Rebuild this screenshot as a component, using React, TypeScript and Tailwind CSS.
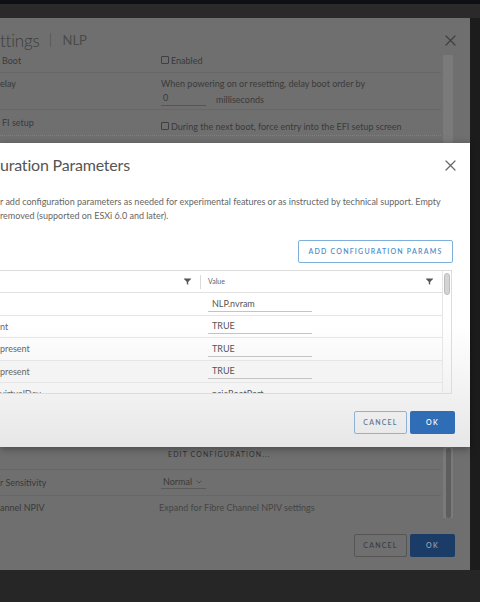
import { ChevronDown } from 'lucide-react';

function CloseIcon({ color = '#666' }: { color?: string }) {
  return (
    <svg width="11" height="11" viewBox="0 0 11 11" fill="none">
      <path d="M1 1l9 9M10 1l-9 9" stroke={color} strokeWidth="1.2" strokeLinecap="round" />
    </svg>
  );
}

function FilterIcon() {
  return (
    <svg width="7" height="7" viewBox="0 0 7 7">
      <path d="M0 0.5h7v1H0z M0.6 1.5h5.8L4.2 4v2.8L2.8 6V4z" fill="#555" />
    </svg>
  );
}

function BackDialog() {
  return (
    <div className="flex w-[470px] flex-col bg-[#6f6f6f] text-[#3a3a3a]">
      <div className="mt-[12px] flex h-[20px] items-center pr-[14px]">
        <span className="text-[17px] font-light leading-none tracking-[-0.2px] text-[#3c3c3c]">ttings</span>
        <span className="mx-[11px] h-[14px] w-px bg-[#5c5c5c]" />
        <span className="text-[13px] leading-none text-[#4a4a4a]">NLP</span>
        <span className="ml-auto">
          <CloseIcon color="#3f3f3f" />
        </span>
      </div>

      <div className="flex">
        <div className="flex w-[441px] flex-col text-[9px] leading-[11px]">
          <div className="flex h-[23px] items-center border-b border-[#676767] pb-[2px]">
            <span className="w-[161px] pl-[2px]">Boot</span>
            <span className="flex items-center gap-[2px]">
              <span className="h-[8px] w-[8px] rounded-[1px] border border-[#3f3f3f]" />
              Enabled
            </span>
          </div>
          <div className="flex h-[37px] border-b border-[#676767] pt-[5px]">
            <span className="w-[161px]">elay</span>
            <div className="flex flex-col">
              <span>When powering on or resetting, delay boot order by</span>
              <div className="mt-[3px] flex items-center">
                <span className="w-[45px] border-b border-[#555] pb-[2px] pl-[2px]">0</span>
                <span className="ml-[10px]">milliseconds</span>
              </div>
            </div>
          </div>
          <div className="flex h-[26px] border-b border-dotted border-[#808080] pt-[7px]">
            <span className="w-[161px] pl-[2px]">FI setup</span>
            <span className="flex items-center gap-[2px]">
              <span className="h-[8px] w-[8px] rounded-[1px] border border-[#3f3f3f]" />
              During the next boot, force entry into the EFI setup screen
            </span>
          </div>
          <div className="h-[311px]" />
          <div className="flex h-[23px] border-b border-[#676767] pl-[168px] pt-[4px]">
            <span className="text-[7px] leading-[7px] tracking-[1.1px] text-[#2f2f2f]">EDIT CONFIGURATION...</span>
          </div>
          <div className="flex h-[26px] items-center border-b border-[#676767]">
            <span className="w-[161px]">r Sensitivity</span>
            <span className="flex w-[45px] items-center gap-[3px] border-b border-[#5a5a5a] pb-[1px] pl-[2px]">
              Normal
              <ChevronDown size={8} strokeWidth={2} />
            </span>
          </div>
          <div className="flex h-[22px] items-center">
            <span className="w-[159px]">annel NPIV</span>
            <span className="text-[#454545]">Expand for Fibre Channel NPIV settings</span>
          </div>
        </div>
        <div className="ml-[2px] mt-[5px] flex w-[10px] flex-col bg-[#7a7a7a]">
          <div className="mx-auto mt-auto h-[70px] w-[5px] rounded-full bg-[#5e5e5e]" />
        </div>
      </div>

      <div className="mt-[16px] flex justify-end gap-[3px] pr-[15px]">
        <button className="h-[23px] w-[53px] rounded-[2px] border border-[#555] text-[7px] font-semibold tracking-[1.2px] text-[#3a3f46]">
          CANCEL
        </button>
        <button className="h-[23px] w-[45px] rounded-[2px] bg-[#1b3c66] text-[7px] font-semibold tracking-[1.2px] text-[#8ea3bd]">
          OK
        </button>
      </div>
    </div>
  );
}

const rows = [
  { name: '', value: 'NLP.nvram' },
  { name: 'nt', value: 'TRUE' },
  { name: 'present', value: 'TRUE' },
  { name: 'present', value: 'TRUE' },
  { name: 'virtualDev', value: 'pcieRootPort' },
];

function FrontDialog() {
  return (
    <div className="absolute left-0 top-[143px] flex h-[304px] w-[470px] flex-col bg-[linear-gradient(to_bottom,#ffffff_0%,#ffffff_60%,#e7e7e7_100%)] text-[#575757] shadow-[0_2px_8px_rgba(0,0,0,0.35)]">
      <div className="mt-[12px] flex h-[20px] items-center pr-[14px]">
        <span className="text-[16px] leading-none tracking-[-0.2px] text-[#555]">uration Parameters</span>
        <span className="ml-auto">
          <CloseIcon />
        </span>
      </div>

      <p className="mt-[20px] w-[455px] text-[9px] leading-[14px] text-[#666]">
        r add configuration parameters as needed for experimental features or as instructed by technical support. Empty
        <br /> removed (supported on ESXi 6.0 and later).
      </p>

      <div className="mt-[17px] flex justify-end pr-[17px]">
        <button className="h-[23px] w-[155px] rounded-[2px] border border-[#7fb0dc] text-[7px] font-semibold tracking-[1.2px] text-[#4c8fcb]">
          ADD CONFIGURATION PARAMS
        </button>
      </div>

      <div className="mr-[18px] mt-[7px] flex h-[124px] overflow-hidden border border-l-0 border-[#dcdcdc]">
        <div className="flex w-[442px] flex-col">
          <div className="flex h-[22px] shrink-0 items-center border-b border-[#e2e2e2] text-[7px]">
            <div className="flex w-[200px] justify-end pr-[9px]">
              <FilterIcon />
            </div>
            <span className="h-[14px] w-px bg-[#dadada]" />
            <span className="ml-[7px] text-[#666]">Value</span>
            <span className="ml-auto mr-[9px]">
              <FilterIcon />
            </span>
          </div>
          {rows.map((r, i) => (
            <div
              key={i}
              className={`flex h-[22.5px] shrink-0 items-center border-b border-[#e6e6e6] text-[9px] leading-[11px] ${
                i >= 3 ? 'bg-[#f4f4f4]' : ''
              }`}
            >
              <span className="w-[200px] text-[#666]">{r.name}</span>
              <span className="ml-[8px] w-[104px] border-b border-[#c4c4c4] py-[2px] pl-[4px] text-[#555]">
                {r.value}
              </span>
            </div>
          ))}
        </div>
        <div className="flex w-[9px] justify-center border-l border-[#e6e6e6] pt-[2px]">
          <div className="h-[22px] w-[6px] rounded-full border border-[#bdbdbd] bg-[#d4d4d4]" />
        </div>
      </div>

      <div className="mt-[17px] flex justify-end gap-[3px] pr-[15px]">
        <button className="h-[23px] w-[53px] rounded-[2px] border border-[#8fb2d4] text-[7px] font-semibold tracking-[1.2px] text-[#5f7894]">
          CANCEL
        </button>
        <button className="h-[23px] w-[45px] rounded-[2px] bg-[#2f6db6] text-[7px] font-semibold tracking-[1.2px] text-white">
          OK
        </button>
      </div>
    </div>
  );
}

export default function App() {
  return (
    <div className="relative h-[602px] w-[480px] overflow-hidden bg-[#262626] font-['Lato',_sans-serif]">
      <div className="h-[4px] bg-[#0d0f12]" />
      <div className="h-[14px] bg-[#2a2a2a]" />
      <div className="flex h-[552px]">
        <BackDialog />
        <div className="flex-1 bg-[#1c1c1c]" />
      </div>
      <FrontDialog />
    </div>
  );
}
